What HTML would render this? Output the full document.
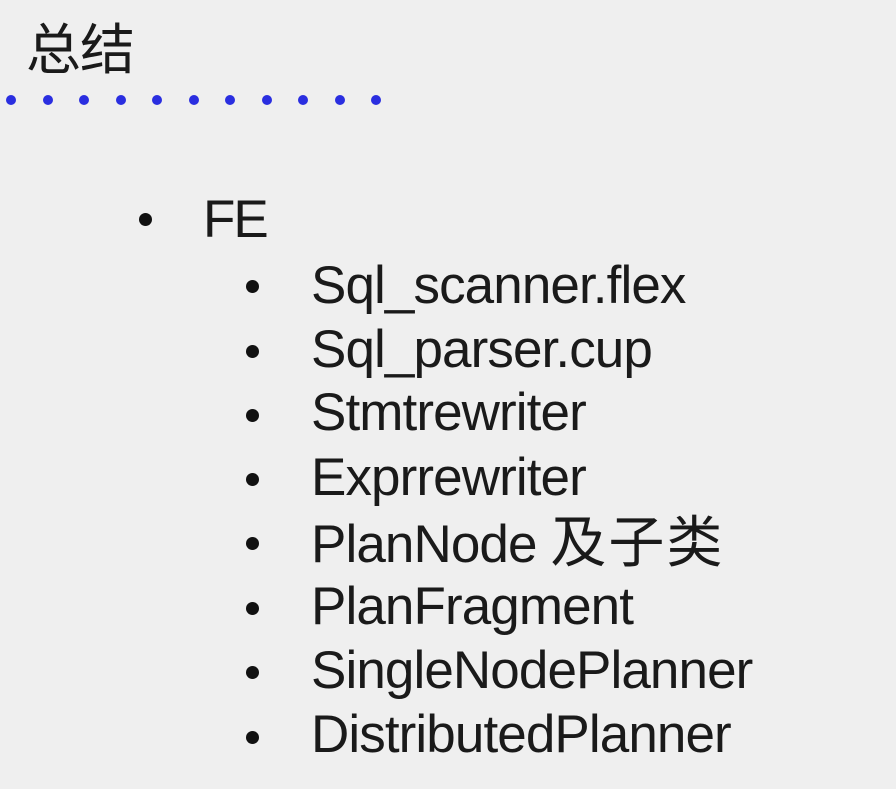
<!DOCTYPE html>
<html><head><meta charset="utf-8"><style>
body{margin:0;width:896px;height:789px;background:#efefef;overflow:hidden;position:relative;font-family:"Liberation Sans","Noto Sans CJK SC",sans-serif;color:#1a1a1a}
.t{position:absolute;white-space:nowrap;line-height:54px;font-size:53px;letter-spacing:-0.9px}
.c{letter-spacing:2px;font-size:56px}
.b{position:absolute;width:13px;height:13px;border-radius:50%;background:#111}
.d{position:absolute;width:10px;height:10px;border-radius:50%;background:#2a2ee0;top:95px}
</style></head><body>
<div class="t" style="left:26px;top:21px;font-size:55px;line-height:58px;letter-spacing:-1px">总结</div>
<div class="d" style="left:6px"></div><div class="d" style="left:43px"></div><div class="d" style="left:79px"></div><div class="d" style="left:116px"></div><div class="d" style="left:152px"></div><div class="d" style="left:189px"></div><div class="d" style="left:225px"></div><div class="d" style="left:262px"></div><div class="d" style="left:298px"></div><div class="d" style="left:335px"></div><div class="d" style="left:371px"></div>
<div class="b" style="left:139px;top:213px"></div>
<div class="t" style="left:203px;top:193px;letter-spacing:-2px">FE</div>
<div class="b" style="left:246px;top:280px"></div><div class="t" style="left:311px;top:259px">Sql_scanner.flex</div>
<div class="b" style="left:246px;top:345px"></div><div class="t" style="left:311px;top:323px">Sql_parser.cup</div>
<div class="b" style="left:246px;top:409px"></div><div class="t" style="left:311px;top:386px">Stmtrewriter</div>
<div class="b" style="left:246px;top:473px"></div><div class="t" style="left:311px;top:451px">Exprrewriter</div>
<div class="b" style="left:246px;top:537px"></div><div class="t" style="left:311px;top:516px">PlanNode <span class="c">及子类</span></div>
<div class="b" style="left:246px;top:602px"></div><div class="t" style="left:311px;top:580px">PlanFragment</div>
<div class="b" style="left:246px;top:666px"></div><div class="t" style="left:311px;top:644px">SingleNodePlanner</div>
<div class="b" style="left:246px;top:731px"></div><div class="t" style="left:311px;top:708px">DistributedPlanner</div>
</body></html>
